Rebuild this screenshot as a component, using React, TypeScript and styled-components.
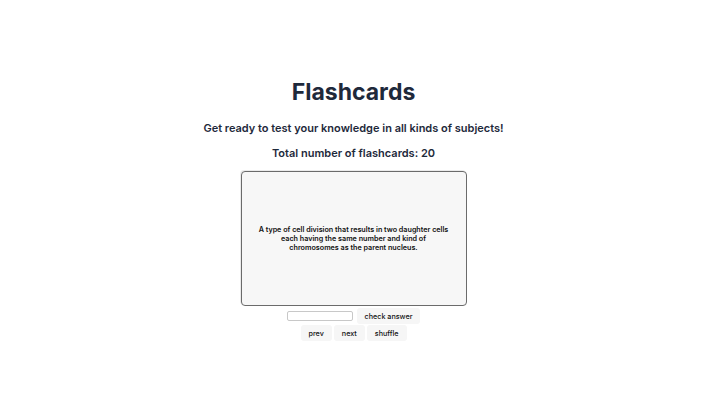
import React, { useState } from "react";
import styled, { createGlobalStyle } from "styled-components";

const GlobalStyle = createGlobalStyle`
  body {
    margin: 0;
    background: #ffffff;
    font-family: Inter, "Noto Sans", sans-serif;
    color: #1e293b;
  }
`;

const Page = styled.div`
  display: flex;
  flex-direction: column;
  align-items: center;
  padding-top: 76px;
  text-align: center;
`;

const Title = styled.h1`
  margin: 0;
  font-size: 23px;
  font-weight: 700;
  line-height: 32px;
  color: #1e293b;
`;

const Subtitle = styled.h3`
  margin: 13px 0 0;
  font-size: 11px;
  font-weight: 600;
  line-height: 14px;
`;

const Count = styled.h4`
  margin: 11px 0 0;
  font-size: 11px;
  font-weight: 600;
  line-height: 14px;
`;

const Card = styled.div`
  box-sizing: border-box;
  margin-top: 11px;
  width: 226px;
  height: 135px;
  display: flex;
  align-items: center;
  justify-content: center;
  padding: 0 10px;
  background: #f7f7f7;
  border: 1.5px solid #6b6b6b;
  border-radius: 4px;
  box-shadow: -1px -1px 0 rgba(0, 0, 0, 0.08);
  font-size: 7.2px;
  font-weight: 600;
  line-height: 9px;
  color: #111;
`;

const Line = styled.span`
  display: block;
  white-space: nowrap;
`;

const Row = styled.div<{ $top: number }>`
  display: flex;
  align-items: center;
  gap: 2px;
  margin-top: ${(p) => p.$top}px;
`;

const Guess = styled.input`
  box-sizing: border-box;
  width: 66px;
  height: 10px;
  margin-right: 2px;
  padding: 0 2px;
  border: 1px solid #c8c8c8;
  border-radius: 2px;
  background: #fff;
  font-size: 7px;
  outline: none;
`;

const Btn = styled.button`
  height: 16px;
  padding: 0 8px;
  border: none;
  border-radius: 3px;
  background: #f6f6f6;
  font-family: Inter, "Noto Sans", sans-serif;
  font-size: 7.2px;
  font-weight: 500;
  color: #111;
  cursor: pointer;
`;

const cards = [
  {
    q: [
      "A type of cell division that results in two daughter cells",
      "each having the same number and kind of",
      "chromosomes as the parent nucleus.",
    ],
    a: "Mitosis",
  },
];

const App = () => {
  const [index] = useState(0);
  const [guess, setGuess] = useState("");

  return (
    <Page>
      <GlobalStyle />
      <Title>Flashcards</Title>
      <Subtitle>Get ready to test your knowledge in all kinds of subjects!</Subtitle>
      <Count>Total number of flashcards: 20</Count>
      <Card>
        <div>
          {cards[index].q.map((line) => (
            <Line key={line}>{line}</Line>
          ))}
        </div>
      </Card>
      <Row $top={2}>
        <Guess value={guess} onChange={(e) => setGuess(e.target.value)} />
        <Btn>check answer</Btn>
      </Row>
      <Row $top={1}>
        <Btn>prev</Btn>
        <Btn>next</Btn>
        <Btn>shuffle</Btn>
      </Row>
    </Page>
  );
};

export default App;
